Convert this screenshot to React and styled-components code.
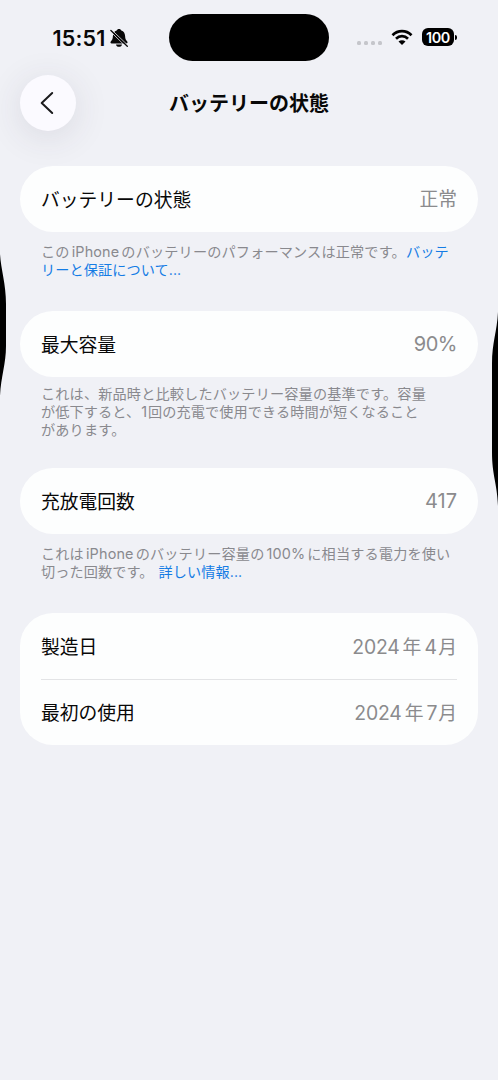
import React from "react";
import styled, { createGlobalStyle } from "styled-components";

const GlobalStyle = createGlobalStyle`
  * {
    box-sizing: border-box;
  }
  body {
    background: #f0f1f6;
    color: #080808;
    font-family: Inter, "Noto Sans CJK JP", sans-serif;
    margin: 0;
  }
`;

const Screen = styled.main`
  background: #f0f1f6;
  height: 1080px;
  overflow: hidden;
  position: relative;
  width: 498px;
`;

const StatusBar = styled.div`
  display: grid;
  grid-template-columns: 169px 160px 169px;
  height: 75px;
  padding-top: 14px;
`;

const StatusLeft = styled.div`
  align-items: center;
  display: flex;
  gap: 4px;
  height: 47px;
  padding-left: 52.5px;
`;

const Clock = styled.span`
  font-size: 21.5px;
  font-weight: 600;
  letter-spacing: 0.2px;
  line-height: 24px;
`;

const Island = styled.div`
  background: #000;
  border-radius: 24px;
  height: 47px;
`;

const StatusRight = styled.div`
  align-items: center;
  display: flex;
  height: 46px;
  padding-left: 28px;
`;

const Dots = styled.div`
  display: flex;
  gap: 3px;
  margin: 11px 9px 0 0;
`;

const Dot = styled.i`
  background: #c5c6cb;
  border-radius: 1.5px;
  height: 4px;
  width: 4px;
`;

const Battery = styled.div`
  align-items: center;
  background: #000;
  border-radius: 6px;
  color: #fff;
  display: flex;
  font-size: 14.4px;
  font-weight: 600;
  height: 18px;
  justify-content: center;
  letter-spacing: -0.4px;
  margin-left: 9px;
  width: 32px;
`;

const BatteryCap = styled.i`
  background: #000;
  border-radius: 0 2px 2px 0;
  height: 5px;
  margin-left: 1px;
  width: 2px;
`;

const NavBar = styled.header`
  align-items: center;
  display: grid;
  grid-template-columns: 56px 1fr 56px;
  height: 56px;
  margin: 0 20px 35px;
`;

const BackButton = styled.button`
  align-items: center;
  background: #fbfaff;
  border: none;
  border-radius: 50%;
  box-shadow: 0 6px 36px rgba(60, 50, 70, 0.12);
  display: flex;
  height: 56px;
  justify-content: center;
  padding: 0 3px 0 0;
  width: 56px;
`;

const Title = styled.h1`
  font-size: 20px;
  font-weight: 700;
  line-height: 28px;
  margin: 0;
  padding-top: 2px;
  text-align: center;
  white-space: nowrap;
`;

const Content = styled.div`
  padding: 0 20px;
`;

const Section = styled.section`
  height: ${(props) => props.$height}px;
`;

const Card = styled.div`
  background: #fdfefe;
  border-radius: 33px;
  padding: 0 21px;
`;

const Row = styled.div`
  align-items: center;
  border-top: ${(props) => (props.$divided ? "1px solid #e3e4e6" : "none")};
  display: flex;
  height: 66px;
  justify-content: space-between;
`;

const Label = styled.span`
  font-size: 18.8px;
  line-height: 28px;
  padding-top: 3px;
`;

const Value = styled.span`
  color: #8b8b8d;
  font-size: ${(props) => (props.$numeric ? "20px" : "18.8px")};
  letter-spacing: ${(props) => props.$spacing || 0}px;
  line-height: 28px;
  padding-top: ${(props) => (props.$numeric ? 0 : 2)}px;
`;

const Num = styled.span`
  font-size: 19.4px;
  letter-spacing: -0.2px;
  margin: ${(props) => props.$margin || "0 3px 0 0"};
`;

const Note = styled.p`
  color: #89898e;
  font-size: 14.15px;
  line-height: 18px;
  margin: 0;
  padding: ${(props) => props.$top || 11}px 21px 0;
`;

const Line = styled.span`
  display: block;
  height: 18px;
  letter-spacing: ${(props) => props.$spacing || 0.17}px;
  white-space: nowrap;
`;

const Latin = styled.span`
  font-size: 14.4px;
  margin: 0 ${(props) => props.$gap || 2}px;
`;

const Link = styled.a`
  color: #147ce5;
  margin-left: ${(props) => props.$gap || 0}px;
`;

const Edge = styled.svg`
  left: ${(props) => (props.$right ? "auto" : 0)};
  position: absolute;
  right: ${(props) => (props.$right ? 0 : "auto")};
  top: ${(props) => props.$top}px;
`;

const BellOff = () => (
  <svg width="18" height="20" viewBox="0 0 18 20">
    <path
      d="M9 1C7.800 1 7 1.700 6.700 2.500C4.200 3.400 3 5.400 2.900 8c-.1 2.900-.6 4-2.100 5.400-.7.700-.3 2 .8 2h14.800c1.100 0 1.500-1.300.8-2-1.500-1.400-2-2.500-2.100-5.400-.1-2.600-1.300-4.600-3.800-5.500C11 1.700 10.200 1 9 1zM6 16.400h6c-.2 1.400-1.400 2.400-3 2.400s-2.800-1-3-2.400z"
      fill="#080808"
    />
    <path d="M.2 3.300L16.600 19M1.500 1.700L18 17.500" stroke="#f0f1f6" strokeWidth="0.900" />
    <path d="M.9 2.500L17.300 18.200" stroke="#080808" strokeWidth="1.300" strokeLinecap="round" />
  </svg>
);

const Wifi = () => (
  <svg width="22" height="17" viewBox="0 0 22 17">
    <path
      d="M1.500 6.200C6.900.8 15.100.8 20.500 6.200M5 9.700c3.500-3.400 8.500-3.400 12 0"
      fill="none"
      stroke="#000"
      strokeWidth="2.700"
    />
    <path d="M11 16.100l-3.500-3.500c2-1.800 5-1.800 7 0z" fill="#000" />
  </svg>
);

const App = () => {
  return (
    <Screen lang="ja">
      <GlobalStyle />
      <StatusBar>
        <StatusLeft>
          <Clock>15:51</Clock>
          <BellOff />
        </StatusLeft>
        <Island />
        <StatusRight>
          <Dots>
            <Dot />
            <Dot />
            <Dot />
            <Dot />
          </Dots>
          <Wifi />
          <Battery>100</Battery>
          <BatteryCap />
        </StatusRight>
      </StatusBar>
      <NavBar>
        <BackButton aria-label="戻る">
          <svg width="16" height="24" viewBox="0 0 16 24">
            <path
              d="M13.200 2L2.700 12 13.200 22"
              fill="none"
              stroke="#1b1b1d"
              strokeWidth="2"
              strokeLinecap="round"
              strokeLinejoin="round"
            />
          </svg>
        </BackButton>
        <Title>バッテリーの状態</Title>
      </NavBar>
      <Content>
        <Section $height={145}>
          <Card>
            <Row>
              <Label>バッテリーの状態</Label>
              <Value>正常</Value>
            </Row>
          </Card>
          <Note>
            <Line>
              この<Latin>iPhone</Latin>のバッテリーのパフォーマンスは正常です。
              <Link>バッテ</Link>
            </Line>
            <Line $spacing={0.1}>
              <Link>リーと保証について...</Link>
            </Line>
          </Note>
        </Section>
        <Section $height={157}>
          <Card>
            <Row>
              <Label>最大容量</Label>
              <Value $numeric $spacing={-0.5}>
                90%
              </Value>
            </Row>
          </Card>
          <Note $top={8}>
            <Line>これは、新品時と比較したバッテリー容量の基準です。容量</Line>
            <Line $spacing={0.1}>
              が低下すると、<Latin $gap={1}>1</Latin>回の充電で使用できる時間が短くなること
            </Line>
            <Line>があります。</Line>
          </Note>
        </Section>
        <Section $height={145}>
          <Card>
            <Row>
              <Label>充放電回数</Label>
              <Value $numeric>417</Value>
            </Row>
          </Card>
          <Note>
            <Line>
              これは<Latin>iPhone</Latin>のバッテリー容量の<Latin>100%</Latin>
              に相当する電力を使い
            </Line>
            <Line $spacing={0.1}>
              切った回数です。<Link $gap={5}>詳しい情報...</Link>
            </Line>
          </Note>
        </Section>
        <Card>
          <Row>
            <Label>製造日</Label>
            <Value>
              <Num>2024</Num>年<Num $margin="0 1.5px 0 3px">4</Num>月
            </Value>
          </Row>
          <Row $divided>
            <Label>最初の使用</Label>
            <Value>
              <Num>2024</Num>年<Num $margin="0 1px 0 3px">7</Num>月
            </Value>
          </Row>
        </Card>
      </Content>
      <Edge $top={254} width="7" height="142" viewBox="0 0 7 142">
        <path d="M0 0C1 16 6 30 6 50V92C6 110 1 122 0 142z" fill="#000" />
      </Edge>
      <Edge $right $top={312} width="7" height="194" viewBox="0 0 7 194">
        <path d="M7 0C6 20 1 30 1 52V140C1 164 6 170 7 194z" fill="#000" />
      </Edge>
    </Screen>
  );
};

export default App;
